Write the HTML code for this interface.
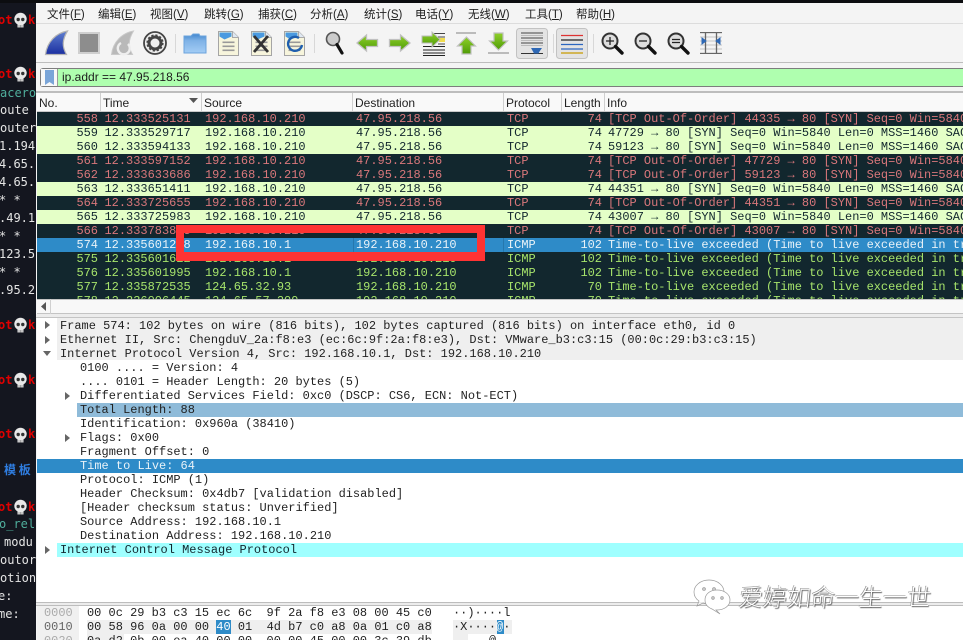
<!DOCTYPE html>
<html lang="zh"><head><meta charset="utf-8"><title>Wireshark</title>
<style>
html,body{margin:0;padding:0;width:963px;height:640px;overflow:hidden;background:#14161f}
*{box-sizing:border-box}
.a{position:absolute}
#term div{position:absolute;left:-1px;width:37px;height:18px;overflow:hidden;white-space:pre;font:12px/18px "DejaVu Sans Mono","Liberation Mono",monospace;color:#e4e4e4}
#term .r{color:#e00000;font-weight:bold;left:-2px;width:16px}
#term .k{color:#e00000;font-weight:bold;left:28px;width:8px}
#term .g{color:#4fae9c}
.m{position:absolute;top:7px;font:11.5px/16px "Liberation Sans","Noto Sans CJK SC",sans-serif;color:#222;white-space:pre}
.h{position:absolute;top:94px;height:17px;font:12px/19px "Liberation Sans",sans-serif;color:#222;white-space:pre}
.s{position:absolute;top:93px;width:1px;height:18px;background:#cfcfcf}
.row{position:absolute;left:37px;width:926px;height:14px;overflow:hidden;font:11.975px/14px "Liberation Mono",monospace;white-space:pre}
.row span{position:absolute;top:0}
.n{left:0;width:61px;text-align:right}
.t{left:67.5px}.src{left:168px}.d{left:319px}.p{left:470px}
.l{left:500px;width:65px;text-align:right}
.i{left:571px}
.R{background:#12272e;color:#d9777b}
.L{background:#e4ffc7;color:#12272e}
.G{background:#12272e;color:#a6e36b}
.S{background:#2e8bc8;color:#e8f2f8}
.tr{position:absolute;height:14px;font:11.975px/14px "Liberation Mono",monospace;color:#222;white-space:pre;overflow:hidden}
.e{position:absolute;width:0;height:0;border-left:5px solid #666;border-top:4px solid transparent;border-bottom:4px solid transparent}
.hex{position:absolute;font:11.975px/14px "Liberation Mono",monospace;color:#222;white-space:pre;height:14px}
.clip{font:11.975px/14px "Liberation Mono",monospace;color:#222;white-space:pre}
</style></head><body>

<div id="term">
<div class="r" style="top:11px">ot</div><div class="k" style="top:11px">k</div>
<div class="r" style="top:65px">ot</div><div class="k" style="top:65px">k</div>
<div class="g" style="top:84px;left:0">acero</div>
<div style="top:101px;left:0">oute</div>
<div style="top:119px;left:0">outer</div>
<div style="top:137px">1.194</div>
<div style="top:155px">4.65.</div>
<div style="top:173px">4.65.</div>
<div style="top:191px">* *</div>
<div style="top:209px">.49.1</div>
<div style="top:227px">* *</div>
<div style="top:245px">123.5</div>
<div style="top:263px">* *</div>
<div style="top:281px">.95.2</div>
<div class="r" style="top:316px">ot</div><div class="k" style="top:316px">k</div>
<div class="r" style="top:371px">ot</div><div class="k" style="top:371px">k</div>
<div class="r" style="top:425px">ot</div><div class="k" style="top:425px">k</div>
<div style="top:461px;left:4px;width:32px;color:#2f7de0;font:bold 12px/18px 'Noto Sans CJK SC',sans-serif">模 板</div>
<div class="r" style="top:498px">ot</div><div class="k" style="top:498px">k</div>
<div class="g" style="top:515px">o_rel</div>
<div style="top:533px;left:4px;width:32px">modu</div>
<div style="top:551px;left:0">outor</div>
<div style="top:569px;left:0">otion</div>
<div style="top:587px;left:-2px">e:</div>
<div style="top:605px;left:-2px">me:</div>
<svg class="a" style="left:0;top:0" width="36" height="640">
<defs><g id="sk"><circle cx="6.5" cy="6" r="6.2" fill="#e8e8e8"/><rect x="3.5" y="10" width="6" height="4.500" fill="#e8e8e8"/><circle cx="4.200" cy="6.500" r="1.700" fill="#333"/><circle cx="8.800" cy="6.500" r="1.700" fill="#333"/><path d="M5 12v2.500M6.500 12v2.500M8 12v2.500" stroke="#777" stroke-width=".6"/></g></defs>
<use href="#sk" x="14" y="13"/><use href="#sk" x="14" y="67"/><use href="#sk" x="14" y="318"/><use href="#sk" x="14" y="373"/><use href="#sk" x="14" y="428"/><use href="#sk" x="14" y="500"/>
</svg>
</div>

<div class="a" style="left:0;top:0;width:963px;height:3px;background:#0c0d10"></div>
<div class="a" style="left:36px;top:3px;width:927px;height:637px;background:#f4f4f4"></div>

<div class="m" style="left:47px">文件(<u>F</u>)</div>
<div class="m" style="left:98px">编辑(<u>E</u>)</div>
<div class="m" style="left:150px">视图(<u>V</u>)</div>
<div class="m" style="left:204px">跳转(<u>G</u>)</div>
<div class="m" style="left:258px">捕获(<u>C</u>)</div>
<div class="m" style="left:310px">分析(<u>A</u>)</div>
<div class="m" style="left:364px">统计(<u>S</u>)</div>
<div class="m" style="left:415px">电话(<u>Y</u>)</div>
<div class="m" style="left:468px">无线(<u>W</u>)</div>
<div class="m" style="left:525px">工具(<u>T</u>)</div>
<div class="m" style="left:576px">帮助(<u>H</u>)</div>
<div class="a" style="left:36px;top:23px;width:927px;height:1px;background:#dcdcdc"></div>

<svg class="a" style="left:0;top:0" width="963" height="70">
<defs>
<linearGradient id="b1" x1="0" y1="0" x2="0" y2="1"><stop offset="0" stop-color="#5f7fd0"/><stop offset="1" stop-color="#1a2fa0"/></linearGradient>
<linearGradient id="fo" x1="0" y1="0" x2="0" y2="1"><stop offset="0" stop-color="#3f86cf"/><stop offset=".35" stop-color="#7fb2e6"/><stop offset="1" stop-color="#a4cdf5"/></linearGradient>
<linearGradient id="gr" x1="0" y1="0" x2="0" y2="1"><stop offset="0" stop-color="#8fd02a"/><stop offset="1" stop-color="#4e9a06"/></linearGradient>
<g id="doc"><path d="M0 0H14L20 6V24H0Z" fill="#f7f5dc" stroke="#a5a5a5"/><path d="M1 1H13V5L6 8L1 5Z" fill="#4a9ae0"/><path d="M14 0V6H20" fill="#dfe8f2" stroke="#aaa"/><g fill="#999"><rect x="4" y="10" width="12" height="1.600"/><rect x="4" y="14" width="12" height="1.600"/><rect x="4" y="18" width="12" height="1.600"/></g></g>
<g id="mag"><circle cx="0" cy="0" r="7.500" fill="#ddd" stroke="#333" stroke-width="2"/><path d="M5.500 5.500L12 12" stroke="#111" stroke-width="3.400" stroke-linecap="round"/></g>
</defs>
<path d="M45.500 54.500C47 42 56 33 67.500 31C62 40 62 47 66.500 54.500Z" fill="url(#b1)" stroke="#b5b5b5" stroke-width="1.200"/>
<rect x="79" y="33" width="20" height="20" fill="#8d8d8d" stroke="#cfcfcf" stroke-width="2"/>
<path d="M111.500 54.500C113 42 122 33 133.500 31C128 40 128 47 132.500 54.500Z" fill="#b9b9b9" stroke="#c9c9c9"/>
<path d="M121 43a6 6 0 1 0 7 1" fill="none" stroke="#eee" stroke-width="2.400"/>
<circle cx="155" cy="43" r="11" fill="#eee" stroke="#444" stroke-width="1.800"/>
<circle cx="155" cy="43" r="6" fill="none" stroke="#444" stroke-width="3"/>
<circle cx="155" cy="43" r="7.800" fill="none" stroke="#444" stroke-width="1.600" stroke-dasharray="2.200 1.900"/>
<rect x="175" y="34" width="1" height="19" fill="#d8d8d8"/>
<path d="M184 36h7l2 -2h6l1 2h6v17h-22Z" fill="url(#fo)" stroke="#6ba3dc"/>
<use href="#doc" x="218.500" y="31.500"/>
<use href="#doc" x="251.500" y="31.500"/>
<path d="M254 36L268 52M268 36L254 52" stroke="#333" stroke-width="2.800"/>
<use href="#doc" x="284.500" y="31.500"/>
<path d="M299 38a7 7 0 1 0 3 7" fill="none" stroke="#1f5fae" stroke-width="2.400"/>
<rect x="314" y="34" width="1" height="19" fill="#d8d8d8"/>
<circle cx="333" cy="39" r="6.500" fill="#ccc" stroke="#555" stroke-width="1.600"/>
<path d="M337 44.500L342 53" stroke="#111" stroke-width="3.200" stroke-linecap="round"/>
<path d="M357 43l9.500-8v4.500h11v7h-11v4.500Z" fill="url(#gr)" stroke="#c0c0c0" stroke-width="1.300"/>
<path d="M410 43l-9.500-8v4.500h-11v7h11v4.500Z" fill="url(#gr)" stroke="#c0c0c0" stroke-width="1.300"/>
<path d="M434 33.500h11M438 37h7M438 44h7" stroke="#444"/>
<rect x="439" y="38" width="6" height="4" fill="#f0dc4e"/>
<path d="M423 46.500h22M423 50h22M423 53h22M423 55.500h22" stroke="#222" stroke-width="1.100"/>
<path d="M440 39.500l-8-7.500v4h-10v7h10v4Z" fill="url(#gr)" stroke="#bbb"/>
<path d="M456 33h20" stroke="#bbb" stroke-width="2"/>
<path d="M466.500 37l9 9h-4.500v8h-9v-8h-4.500Z" fill="url(#gr)" stroke="#c0c0c0" stroke-width="1.200"/>
<path d="M488 53h21" stroke="#bbb" stroke-width="2"/>
<path d="M498.500 50l9-9h-4.500v-8h-9v8h-4.500Z" fill="url(#gr)" stroke="#c0c0c0" stroke-width="1.200"/>
<rect x="516.500" y="28.500" width="31" height="30" rx="3" fill="#e3e3e3" stroke="#c2c2c2"/>
<path d="M521 33h22M521 38h22M521 43h22" stroke="#444"/><path d="M521 35.500h22M521 40.500h22M521 45.500h22" stroke="#bbb"/>
<path d="M521 53.500h22" stroke="#333"/>
<path d="M531 48h11l-2.500 3.500l-1 2h-4.500l-1-2Z" fill="#2e68b5"/>
<rect x="553" y="34" width="1" height="19" fill="#d8d8d8"/>
<rect x="556.500" y="28.500" width="31" height="30" rx="3" fill="#e3e3e3" stroke="#c2c2c2"/>
<path d="M561 35.500h22" stroke="#d33" stroke-width="1.200"/><path d="M561 40h22" stroke="#222" stroke-width="1.200"/><path d="M561 44.500h22" stroke="#2b66c0" stroke-width="1.200"/><path d="M561 49h22" stroke="#2b66c0" stroke-width="1.200"/><path d="M561 53h22" stroke="#c79a00" stroke-width="1.200"/>
<rect x="593" y="34" width="1" height="19" fill="#d8d8d8"/>
<use href="#mag" x="610" y="41"/><path d="M606 41h8M610 37v8" stroke="#222" stroke-width="1.300"/>
<use href="#mag" x="643" y="41"/><path d="M639 41h8" stroke="#222" stroke-width="1.300"/>
<use href="#mag" x="676" y="41"/><path d="M672 39.500h8M672 42.500h8" stroke="#222" stroke-width="1.300"/>
<path d="M700 33h22M700 37h22M700 41h22M700 45h22M700 49h22M700 53h22" stroke="#c4c4c4"/>
<path d="M700 32.500h22M700 53.500h22" stroke="#666"/>
<path d="M705.500 32v22M716.500 32v22" stroke="#666" stroke-width="1.300"/>
<path d="M702 38l4 3l-4 3Z M720 38l-4 3l4 3Z" fill="#2e68b5" stroke="#2e68b5"/>
</svg>
<div class="a" style="left:36px;top:62px;width:927px;height:1px;background:#bdbdbd"></div>

<div class="a" style="left:40px;top:68px;width:923px;height:19px;background:#afffaf;border:1px solid #7d7d7d;border-right:0;border-radius:3px 0 0 3px"></div>
<div class="a" style="left:41px;top:69px;width:17px;height:17px;background:#f8f8f8;border-right:1px solid #9a9a9a"></div>
<svg class="a" style="left:44px;top:70px" width="12" height="15"><path d="M1 0H10V15L5.500 12L1 15Z" fill="#7aa5d8"/></svg>
<div class="a" style="left:62px;top:69px;font:12px/17px 'Liberation Sans',sans-serif;color:#1d1d1d;white-space:pre">ip.addr == 47.95.218.56</div>
<div class="a" style="left:36px;top:91px;width:927px;height:2px;background:#bdbdbd"></div>

<div class="a" style="left:37px;top:93px;width:926px;height:18px;background:#f9f9f9"></div>
<div class="h" style="left:39px">No.</div><div class="s" style="left:100px"></div>
<div class="h" style="left:103px">Time</div>
<svg class="a" style="left:189px;top:98px" width="10" height="6"><path d="M0 0H9L4.500 5Z" fill="#555"/></svg>
<div class="s" style="left:201px"></div>
<div class="h" style="left:204px">Source</div><div class="s" style="left:352px"></div>
<div class="h" style="left:355px">Destination</div><div class="s" style="left:503px"></div>
<div class="h" style="left:506px">Protocol</div><div class="s" style="left:561px"></div>
<div class="h" style="left:564px">Length</div><div class="s" style="left:604px"></div>
<div class="h" style="left:607px">Info</div>
<div class="a" style="left:37px;top:111px;width:926px;height:1px;background:#c9c9c9"></div>

<div class="row R" style="top:112px"><span class="n">558</span><span class="t">12.333525131</span><span class="src">192.168.10.210</span><span class="d">47.95.218.56</span><span class="p">TCP</span><span class="l">74</span><span class="i">[TCP Out-Of-Order] 44335 → 80 [SYN] Seq=0 Win=5840 Len=0 MSS=1460 SACK</span></div>
<div class="row L" style="top:126px"><span class="n">559</span><span class="t">12.333529717</span><span class="src">192.168.10.210</span><span class="d">47.95.218.56</span><span class="p">TCP</span><span class="l">74</span><span class="i">47729 → 80 [SYN] Seq=0 Win=5840 Len=0 MSS=1460 SACK_PERM=1</span></div>
<div class="row L" style="top:140px"><span class="n">560</span><span class="t">12.333594133</span><span class="src">192.168.10.210</span><span class="d">47.95.218.56</span><span class="p">TCP</span><span class="l">74</span><span class="i">59123 → 80 [SYN] Seq=0 Win=5840 Len=0 MSS=1460 SACK_PERM=1</span></div>
<div class="row R" style="top:154px"><span class="n">561</span><span class="t">12.333597152</span><span class="src">192.168.10.210</span><span class="d">47.95.218.56</span><span class="p">TCP</span><span class="l">74</span><span class="i">[TCP Out-Of-Order] 47729 → 80 [SYN] Seq=0 Win=5840 Len=0 MSS=1460 SACK</span></div>
<div class="row R" style="top:168px"><span class="n">562</span><span class="t">12.333633686</span><span class="src">192.168.10.210</span><span class="d">47.95.218.56</span><span class="p">TCP</span><span class="l">74</span><span class="i">[TCP Out-Of-Order] 59123 → 80 [SYN] Seq=0 Win=5840 Len=0 MSS=1460 SACK</span></div>
<div class="row L" style="top:182px"><span class="n">563</span><span class="t">12.333651411</span><span class="src">192.168.10.210</span><span class="d">47.95.218.56</span><span class="p">TCP</span><span class="l">74</span><span class="i">44351 → 80 [SYN] Seq=0 Win=5840 Len=0 MSS=1460 SACK_PERM=1</span></div>
<div class="row R" style="top:196px"><span class="n">564</span><span class="t">12.333725655</span><span class="src">192.168.10.210</span><span class="d">47.95.218.56</span><span class="p">TCP</span><span class="l">74</span><span class="i">[TCP Out-Of-Order] 44351 → 80 [SYN] Seq=0 Win=5840 Len=0 MSS=1460 SACK</span></div>
<div class="row L" style="top:210px"><span class="n">565</span><span class="t">12.333725983</span><span class="src">192.168.10.210</span><span class="d">47.95.218.56</span><span class="p">TCP</span><span class="l">74</span><span class="i">43007 → 80 [SYN] Seq=0 Win=5840 Len=0 MSS=1460 SACK_PERM=1</span></div>
<div class="row R" style="top:224px"><span class="n">566</span><span class="t">12.333783815</span><span class="src">192.168.10.210</span><span class="d">47.95.218.56</span><span class="p">TCP</span><span class="l">74</span><span class="i">[TCP Out-Of-Order] 43007 → 80 [SYN] Seq=0 Win=5840 Len=0 MSS=1460 SACK</span></div>
<div class="row S" style="top:238px"><span class="n">574</span><span class="t">12.335601288</span><span class="src">192.168.10.1</span><span class="d">192.168.10.210</span><span class="p">ICMP</span><span class="l">102</span><span class="i">Time-to-live exceeded (Time to live exceeded in transit)</span></div>
<div class="row G" style="top:252px"><span class="n">575</span><span class="t">12.335601622</span><span class="src">192.168.10.1</span><span class="d">192.168.10.210</span><span class="p">ICMP</span><span class="l">102</span><span class="i">Time-to-live exceeded (Time to live exceeded in transit)</span></div>
<div class="row G" style="top:266px"><span class="n">576</span><span class="t">12.335601995</span><span class="src">192.168.10.1</span><span class="d">192.168.10.210</span><span class="p">ICMP</span><span class="l">102</span><span class="i">Time-to-live exceeded (Time to live exceeded in transit)</span></div>
<div class="row G" style="top:280px"><span class="n">577</span><span class="t">12.335872535</span><span class="src">124.65.32.93</span><span class="d">192.168.10.210</span><span class="p">ICMP</span><span class="l">70</span><span class="i">Time-to-live exceeded (Time to live exceeded in transit)</span></div>
<div class="row G" style="top:294px;height:5px"><span class="n">578</span><span class="t">12.336006445</span><span class="src">124.65.57.209</span><span class="d">192.168.10.210</span><span class="p">ICMP</span><span class="l">70</span><span class="i">Time-to-live exceeded (Time to live exceeded in transit)</span></div>
<div class="a" style="left:353px;top:238px;width:1px;height:14px;background:#2577ad"></div>
<div class="a" style="left:503px;top:238px;width:1px;height:14px;background:#2577ad"></div>

<div class="a" style="left:37px;top:299px;width:926px;height:15px;background:#f8f8f8;border-top:1px solid #c4c4c4;border-bottom:1px solid #c4c4c4"></div>
<div class="a" style="left:50px;top:299px;width:1px;height:15px;background:#d0d0d0"></div>
<svg class="a" style="left:40px;top:302px" width="8" height="10"><path d="M6 0V9L1 4.500Z" fill="#555"/></svg>
<div class="a" style="left:36px;top:314px;width:927px;height:4px;background:#ececec;border-bottom:1px solid #c4c4c4"></div>

<div class="a" style="left:37px;top:318px;width:926px;height:284px;background:#fff"></div>
<div class="a" style="left:57px;top:318px;width:906px;height:42px;background:#efefef"></div>
<div class="a" style="left:77px;top:403px;width:886px;height:14px;background:#8fbbd9"></div>
<div class="a" style="left:37px;top:459px;width:926px;height:14px;background:#2e8bc8"></div>
<div class="a" style="left:57px;top:543px;width:906px;height:14px;background:#9fffff"></div>

<i class="e" style="left:45px;top:321px"></i>
<i class="e" style="left:45px;top:336px"></i>
<i class="a" style="left:43px;top:351px;width:0;height:0;border-top:5px solid #666;border-left:4.500px solid transparent;border-right:4.500px solid transparent"></i>
<i class="e" style="left:65px;top:392px"></i>
<i class="e" style="left:65px;top:434px"></i>
<i class="e" style="left:45px;top:546px"></i>

<div class="tr" style="left:60px;top:319px">Frame 574: 102 bytes on wire (816 bits), 102 bytes captured (816 bits) on interface eth0, id 0</div>
<div class="tr" style="left:60px;top:333px">Ethernet II, Src: ChengduV_2a:f8:e3 (ec:6c:9f:2a:f8:e3), Dst: VMware_b3:c3:15 (00:0c:29:b3:c3:15)</div>
<div class="tr" style="left:60px;top:347px">Internet Protocol Version 4, Src: 192.168.10.1, Dst: 192.168.10.210</div>
<div class="tr" style="left:80px;top:361px">0100 .... = Version: 4</div>
<div class="tr" style="left:80px;top:375px">.... 0101 = Header Length: 20 bytes (5)</div>
<div class="tr" style="left:80px;top:389px">Differentiated Services Field: 0xc0 (DSCP: CS6, ECN: Not-ECT)</div>
<div class="tr" style="left:80px;top:403px">Total Length: 88</div>
<div class="tr" style="left:80px;top:417px">Identification: 0x960a (38410)</div>
<div class="tr" style="left:80px;top:431px">Flags: 0x00</div>
<div class="tr" style="left:80px;top:445px">Fragment Offset: 0</div>
<div class="tr" style="left:80px;top:459px;color:#e8f2f8">Time to Live: 64</div>
<div class="tr" style="left:80px;top:473px">Protocol: ICMP (1)</div>
<div class="tr" style="left:80px;top:487px">Header Checksum: 0x4db7 [validation disabled]</div>
<div class="tr" style="left:80px;top:501px">[Header checksum status: Unverified]</div>
<div class="tr" style="left:80px;top:515px">Source Address: 192.168.10.1</div>
<div class="tr" style="left:80px;top:529px">Destination Address: 192.168.10.210</div>
<div class="tr" style="left:60px;top:543px;color:#12272e">Internet Control Message Protocol</div>

<div class="a" style="left:36px;top:602px;width:927px;height:4px;background:#ececec;border-top:1px solid #bdbdbd;border-bottom:1px solid #bdbdbd"></div>
<div class="a" style="left:37px;top:606px;width:926px;height:34px;background:#fff"></div>
<div class="a" style="left:37px;top:606px;width:42px;height:34px;background:#f0f0f0"></div>
<div class="a" style="left:87px;top:620px;width:345px;height:14px;background:#efefef"></div>
<div class="a" style="left:87px;top:634px;width:37px;height:6px;background:#efefef"></div>
<div class="a" style="left:453px;top:620px;width:59px;height:14px;background:#efefef"></div>
<div class="a" style="left:453px;top:634px;width:15px;height:6px;background:#efefef"></div>
<div class="a" style="left:216px;top:620px;width:15px;height:14px;background:#2e8bc8"></div>
<div class="a" style="left:497px;top:620px;width:7px;height:14px;background:#2e8bc8"></div>

<div class="hex" style="left:44px;top:606px;color:#aaa">0000</div>
<div class="hex" style="left:44px;top:620px;color:#666">0010</div>
<div class="a" style="left:44px;top:634px;height:6px;overflow:hidden"><div class="clip" style="color:#aaa">0020</div></div>
<div class="hex" style="left:87px;top:606px">00 0c 29 b3 c3 15 ec 6c  9f 2a f8 e3 08 00 45 c0</div>
<div class="hex" style="left:87px;top:620px">00 58 96 0a 00 00 <span style="color:#fff">40</span> 01  4d b7 c0 a8 0a 01 c0 a8</div>
<div class="a" style="left:87px;top:634px;height:6px;overflow:hidden;width:360px"><div class="clip">0a d2 0b 00 ea 40 00 00  00 00 45 00 00 3c 39 db</div></div>
<div class="hex" style="left:453px;top:606px">··)····l</div>
<div class="hex" style="left:453px;top:620px">·X····<span style="color:#fff">@</span>·</div>
<div class="a" style="left:453px;top:634px;height:6px;overflow:hidden"><div class="clip">     @  </div></div>

<div class="a" style="left:176px;top:225px;width:309px;height:36px;border:8px solid #ff3333;border-bottom-width:9px"></div>

<svg class="a" style="left:690px;top:578px" width="50" height="38">
<path d="M19 2C10 2 4 8 4 14C4 18 6 21 9 23L7 28L13 25C15 26 17 26 19 26C28 26 34 20 34 14C34 8 28 2 19 2Z" fill="#fff" fill-opacity=".7" stroke="#999" stroke-width=".7"/>
<circle cx="14" cy="11" r="1.300" fill="none" stroke="#999"/><circle cx="24" cy="11" r="1.300" fill="none" stroke="#999"/>
<path d="M27 12C34 12 40 16 40 22C40 28 34 32 27 32L26 32L30 36L22 31C17 29 15 26 15 22C15 16 20 12 27 12Z" fill="#fff" stroke="#999" stroke-width=".7"/>
<circle cx="23" cy="20" r="1.200" fill="none" stroke="#999"/><circle cx="32" cy="20" r="1.200" fill="none" stroke="#999"/>
</svg>
<div class="a" style="left:739px;top:580px;font:300 24px/32px 'Noto Sans CJK SC',sans-serif;color:#fff;text-shadow:1px 1px 1px #555,-.5px -.5px 0 #888;white-space:pre;transform:skewX(-6deg)">爱婷如命一生一世</div>
</body></html>
